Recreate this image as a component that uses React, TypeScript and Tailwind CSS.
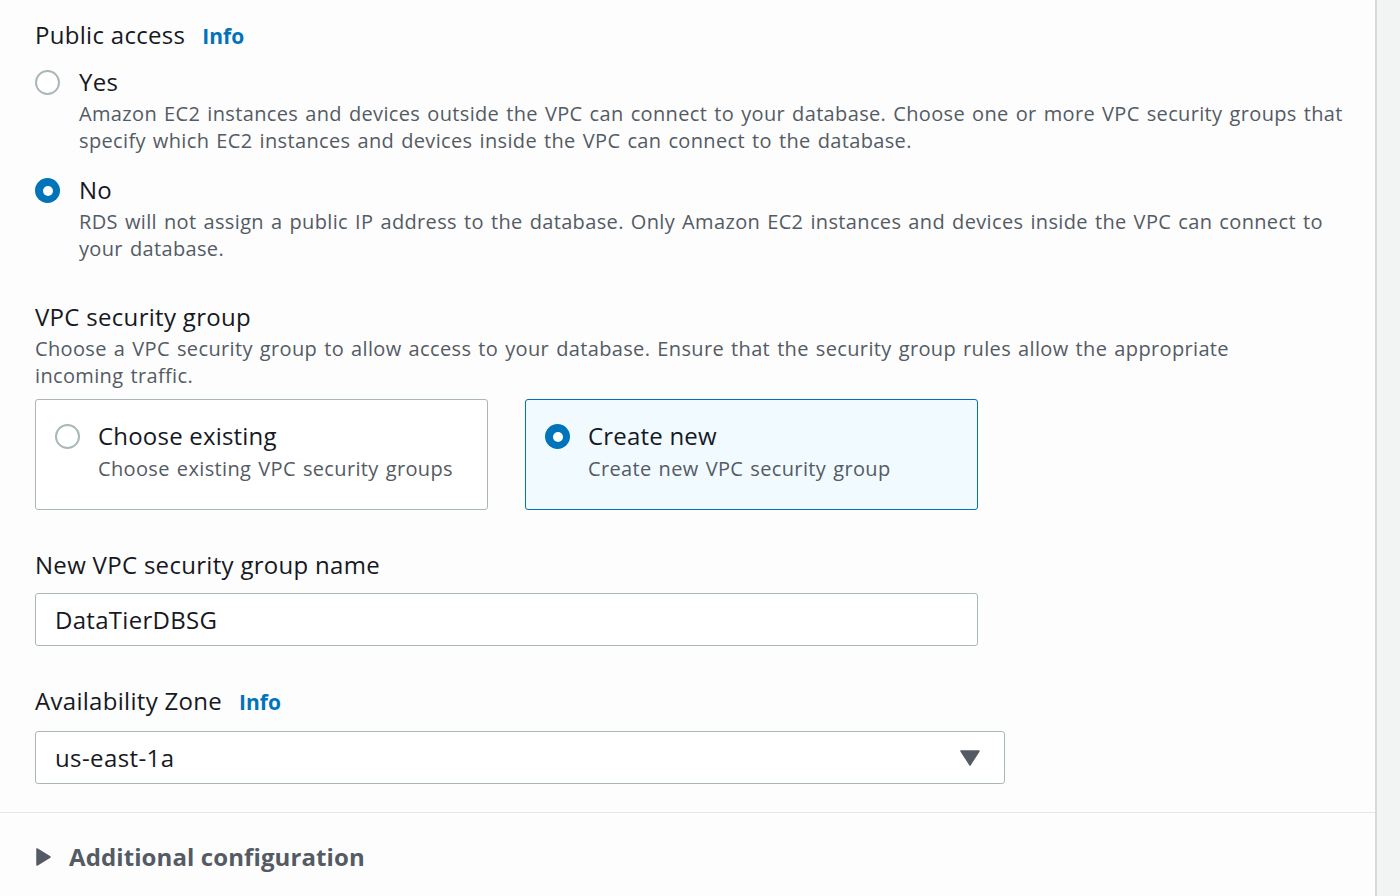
import React, { useState } from 'react';

const font = { fontFamily: '"Open Sans", "Noto Sans", sans-serif' };

const Radio = ({ checked }: { checked: boolean }) => (
  <span
    className={`flex h-[25px] w-[25px] shrink-0 items-center justify-center rounded-full ${
      checked ? 'bg-[#0073bb]' : 'border-2 border-[#aab7b8] bg-white'
    }`}
  >
    {checked && <span className="h-[10px] w-[10px] rounded-full bg-white" />}
  </span>
);

const Info = () => <span className="ml-[17px] text-[21px] font-bold tracking-normal text-[#0073bb]">Info</span>;

const desc = 'text-[20px] leading-[27px] tracking-[0.35px] [word-spacing:1.5px] text-[#545b64]';
const heading = 'text-[24px] leading-[34px] tracking-[0.3px]';

const App = () => {
  const [access, setAccess] = useState('no');
  const [group, setGroup] = useState('new');

  return (
    <div className="flex h-[896px] w-[1400px] overflow-hidden bg-[#f2f3f3] text-[#16191f]" style={font}>
      {/* Main panel */}
      <div className="flex w-[1377px] flex-col border-r-2 border-[#d5dbdb] bg-[#fdfdfd]">
        <div className="flex flex-col px-[35px] pt-[18px]">
          {/* Public access */}
          <div className={`flex items-baseline ${heading}`}>
            Public access <Info />
          </div>
          <div className="mt-[15px] flex flex-col gap-[22px]">
            {[
              {
                id: 'yes',
                label: 'Yes',
                desc: 'Amazon EC2 instances and devices outside the VPC can connect to your database. Choose one or more VPC security groups that specify which EC2 instances and devices inside the VPC can connect to the database.',
              },
              {
                id: 'no',
                label: 'No',
                desc: 'RDS will not assign a public IP address to the database. Only Amazon EC2 instances and devices inside the VPC can connect to your database.',
              },
            ].map((o) => (
              <button key={o.id} onClick={() => setAccess(o.id)} className="flex gap-[19px] text-left">
                <span className="pt-[2px]">
                  <Radio checked={access === o.id} />
                </span>
                <div className="flex flex-col">
                  <span className="text-[24px] leading-[28px] tracking-[0.3px]">{o.label}</span>
                  <span className={`mt-[4px] w-[1275px] ${desc}`}>{o.desc}</span>
                </div>
              </button>
            ))}
          </div>

          {/* VPC security group */}
          <div className={`mt-[38px] ${heading}`}>VPC security group</div>
          <p className={`mt-[1px] w-[1240px] ${desc}`}>
            Choose a VPC security group to allow access to your database. Ensure that the security group rules allow the
            appropriate incoming traffic.
          </p>
          <div className="mt-[10px] flex gap-[37px]">
            {[
              { id: 'existing', label: 'Choose existing', desc: 'Choose existing VPC security groups' },
              { id: 'new', label: 'Create new', desc: 'Create new VPC security group' },
            ].map((o) => (
              <button
                key={o.id}
                onClick={() => setGroup(o.id)}
                className={`flex h-[111px] w-[453px] gap-[18px] rounded-[3px] border-[1.5px] px-[19px] pt-[21px] text-left ${
                  group === o.id ? 'border-[#0073bb] bg-[#f1faff]' : 'border-[#aab7b8] bg-white'
                }`}
              >
                <span className="pt-[3px]">
                  <Radio checked={group === o.id} />
                </span>
                <div className="flex flex-col">
                  <span className="text-[24px] leading-[30px] tracking-[0.2px]">{o.label}</span>
                  <span className={`mt-[4px] ${desc}`}>{o.desc}</span>
                </div>
              </button>
            ))}
          </div>

          {/* Name */}
          <div className={`mt-[38px] ${heading}`}>New VPC security group name</div>
          <div className="mt-[11px] flex h-[53px] w-[943px] items-center rounded-[3px] border-[1.5px] border-[#aab7b8] bg-white px-[19px] text-[24px] tracking-[0.3px]">
            DataTierDBSG
          </div>

          {/* Availability Zone */}
          <div className={`mt-[38px] flex items-baseline ${heading}`}>
            Availability Zone <Info />
          </div>
          <div className="mt-[12px] flex h-[53px] w-[970px] items-center justify-between rounded-[3px] border-[1.5px] border-[#aab7b8] bg-white pl-[19px] pr-[24px] text-[24px] tracking-[0.4px]">
            <span>us-east-1a</span>
            <svg width="20" height="16" viewBox="0 0 20 16">
              <path d="M1 1h18L10 15z" fill="#545b64" stroke="#545b64" strokeWidth="1.5" strokeLinejoin="round" />
            </svg>
          </div>
        </div>

        {/* Additional configuration */}
        <div className="mt-[28px] border-t-[1.5px] border-[#e4e7e7]">
          <div className="flex items-center gap-[18px] pl-[36px] pt-[29px]">
            <svg width="15" height="18" viewBox="0 0 15 18">
              <path d="M1 1v16l13-8z" fill="#545b64" stroke="#545b64" strokeWidth="1.5" strokeLinejoin="round" />
            </svg>
            <span className="text-[24px] font-bold leading-[30px] tracking-[0.1px] text-[#545b64]">Additional configuration</span>
          </div>
        </div>
      </div>
    </div>
  );
};

export default App;
